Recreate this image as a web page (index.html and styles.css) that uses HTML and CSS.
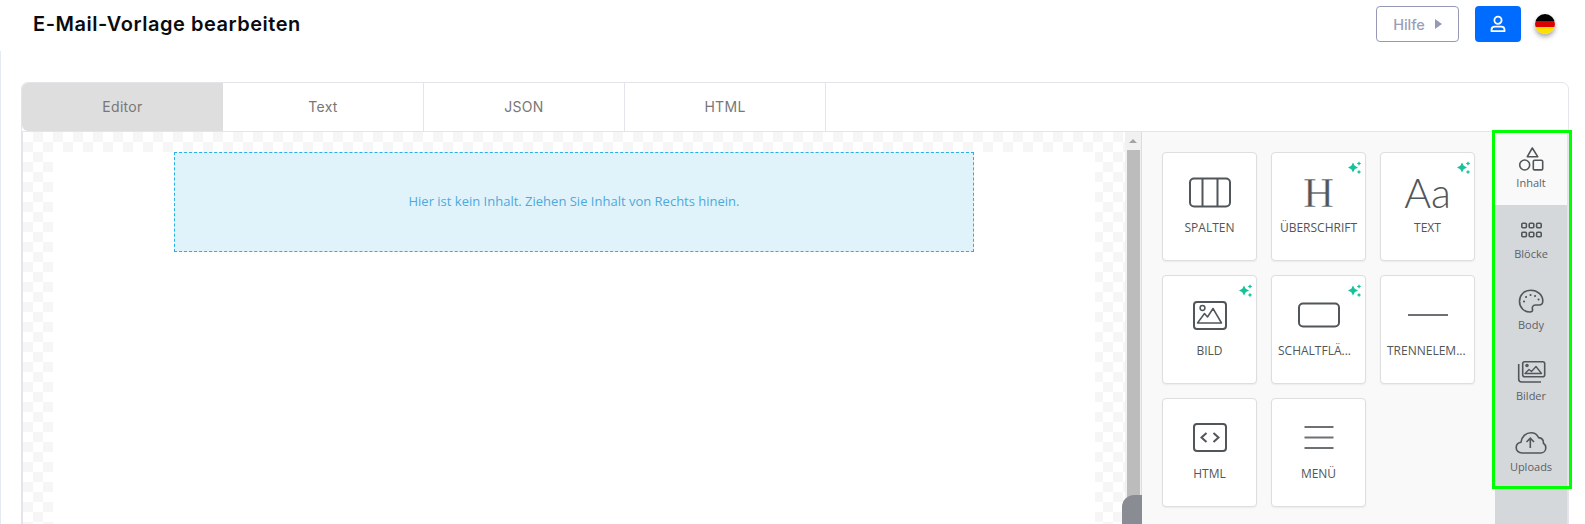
FILE: index.html
```html
<!DOCTYPE html>
<html lang="de">

<head>
    <meta charset="UTF-8">
    <meta name="viewport" content="width=device-width, initial-scale=1.0">
    <title>E-Mail-Vorlage bearbeiten</title>
    <link rel="stylesheet" href="styles.css">
</head>

<body>

    <svg class="defs" width="0" height="0">
        <symbol id="sparkle" viewBox="0 0 14 14">
            <path d="M5 1.5 6.7 4.8 10 6.5 6.7 8.2 5 11.5 3.3 8.2 0 6.5 3.3 4.8Z" />
            <path d="M11 .2 11.8 1.7 13.3 2.5 11.8 3.3 11 4.8 10.2 3.3 8.7 2.5 10.2 1.7Z" />
            <path d="M11 8.7 11.8 10.2 13.3 11 11.8 11.8 11 13.3 10.2 11.8 8.7 11 10.2 10.2Z" />
        </symbol>
    </svg>

    <header class="topbar">
        <h1 class="page-title">E-Mail-Vorlage bearbeiten</h1>
        <div class="topbar-actions">
            <button class="help-btn" type="button">Hilfe <span class="caret"></span></button>
            <button class="user-btn" type="button">
                <svg width="18" height="18" viewBox="0 0 18 18" fill="none" stroke="#fff" stroke-width="1.8">
                    <circle cx="9" cy="5.2" r="3.6" />
                    <path d="M2.5 16.2v-1.4c0-2 1.6-3.2 3.4-3.2h6.2c1.8 0 3.4 1.2 3.4 3.2v1.4Z" stroke-linejoin="round" />
                </svg>
            </button>
            <span class="flag"></span>
        </div>
    </header>

    <main class="main">
        <section class="panel">
            <nav class="tabs">
                <a class="tab tab-active">Editor</a>
                <a class="tab">Text</a>
                <a class="tab">JSON</a>
                <a class="tab">HTML</a>
            </nav>

            <div class="workarea">
                <div class="canvas">
                    <div class="canvas-body">
                        <div class="dropzone">Hier ist kein Inhalt. Ziehen Sie Inhalt von Rechts hinein.</div>
                    </div>
                </div>

                <div class="scrollbar">
                    <span class="scroll-up"></span>
                    <span class="scroll-thumb"></span>
                </div>

                <div class="tools">
                    <div class="tool">
                        <svg class="tool-icon" viewBox="0 0 44 42">
                            <rect x="2" y="6.5" width="40" height="28" rx="4" />
                            <path d="M14.5 6.5v28M29.5 6.5v28" />
                        </svg>
                        <span class="tool-label">Spalten</span>
                    </div>
                    <div class="tool">
                        <svg class="sparkle"><use href="#sparkle" /></svg>
                        <span class="tool-glyph glyph-h">H</span>
                        <span class="tool-label">Überschrift</span>
                    </div>
                    <div class="tool">
                        <svg class="sparkle"><use href="#sparkle" /></svg>
                        <span class="tool-glyph glyph-aa">Aa</span>
                        <span class="tool-label">Text</span>
                    </div>
                    <div class="tool">
                        <svg class="sparkle"><use href="#sparkle" /></svg>
                        <svg class="tool-icon" viewBox="0 0 44 42">
                            <rect x="6" y="7" width="32" height="27" rx="3" />
                            <circle cx="14.5" cy="13" r="2.4" stroke-width="1.5" />
                            <path d="M9.5 28 16.5 18.5 19.5 22 25 13.5 33.5 28Z" stroke-width="1.5" stroke-linejoin="round" />
                        </svg>
                        <span class="tool-label">Bild</span>
                    </div>
                    <div class="tool">
                        <svg class="sparkle"><use href="#sparkle" /></svg>
                        <svg class="tool-icon" viewBox="0 0 44 42">
                            <rect x="2" y="8.5" width="40" height="23" rx="4" />
                        </svg>
                        <span class="tool-label tool-label-cut">Schaltflä...</span>
                    </div>
                    <div class="tool">
                        <svg class="tool-icon tool-icon-soft" viewBox="0 0 44 42">
                            <path d="M2 20h40" />
                        </svg>
                        <span class="tool-label tool-label-cut">Trennelem...</span>
                    </div>
                    <div class="tool">
                        <svg class="tool-icon" viewBox="0 0 44 42">
                            <rect x="6" y="6" width="32" height="27" rx="3" />
                            <path d="M18.5 15 13.5 19.5 18.5 24M25.5 15 30.5 19.5 25.5 24" />
                        </svg>
                        <span class="tool-label">HTML</span>
                    </div>
                    <div class="tool">
                        <svg class="tool-icon tool-icon-soft" viewBox="0 0 44 42">
                            <path d="M7.5 9h29M7.5 19.5h29M7.5 30h29" />
                        </svg>
                        <span class="tool-label">Menü</span>
                    </div>
                </div>

                <aside class="sidebar">
                    <div class="side-item side-active">
                        <svg class="side-icon" viewBox="0 0 36 24">
                            <path d="M19.3 1 24.7 9.7H14.3Z" stroke-linejoin="round" />
                            <circle cx="11.7" cy="18" r="5" />
                            <rect x="20.3" y="13.3" width="9.4" height="9.6" rx="1.2" />
                        </svg>
                        <span class="side-label">Inhalt</span>
                    </div>
                    <div class="side-item">
                        <svg class="side-icon" viewBox="0 0 36 24">
                            <rect x="8.8" y="5.2" width="4.6" height="4.6" rx="1" />
                            <rect x="16.2" y="5.2" width="4.6" height="4.6" rx="1" />
                            <rect x="23.6" y="5.2" width="4.6" height="4.6" rx="1" />
                            <rect x="8.8" y="14.2" width="4.6" height="4.6" rx="1" />
                            <rect x="16.2" y="14.2" width="4.6" height="4.6" rx="1" />
                            <rect x="23.6" y="14.2" width="4.6" height="4.6" rx="1" />
                        </svg>
                        <span class="side-label">Blöcke</span>
                    </div>
                    <div class="side-item">
                        <svg class="side-icon" viewBox="0 0 36 24">
                            <path d="M18 1.2C11 1.2 6.5 6.2 6.5 12.2 6.5 18.5 11 23 17 23 19 23 19.8 21.8 19.5 20.5 19 18.5 19.5 16 22.5 16H26C28.5 16 29.8 14.5 29.8 12 29.8 6 24.5 1.2 18 1.2Z" stroke-linejoin="round" />
                            <path d="M11 12.5h.1M13 8h.1M17.5 6h.1M22 7h.1M25.5 10.5h.1" stroke-width="2" stroke-linecap="round" />
                        </svg>
                        <span class="side-label">Body</span>
                    </div>
                    <div class="side-item">
                        <svg class="side-icon" viewBox="0 0 36 24">
                            <rect x="9.7" y="1.7" width="22" height="15" rx="2" />
                            <path d="M5.7 4v15a3 3 0 0 0 3 3H28" />
                            <circle cx="14" cy="5.5" r="1" />
                            <path d="M12 13.5 16 9.5 18.5 11.5 23 6.5 28.5 13.5Z" stroke-width="1.3" stroke-linejoin="round" />
                        </svg>
                        <span class="side-label">Bilder</span>
                    </div>
                    <div class="side-item">
                        <svg class="side-icon" viewBox="0 0 36 24">
                            <path d="M9 22C5.5 22 3.2 19.5 3.2 16.7 3.2 13.8 5.2 11.8 8 11.3 8.5 5.5 13 1.8 18 1.8 21.5 1.8 24.2 3.6 25.6 6.6 28.8 7 30.6 9.4 30.4 12.2 32 13.2 32.8 14.8 32.8 16.7 32.8 19.8 30.5 22 27.5 22Z" stroke-linejoin="round" />
                            <path d="M17.3 17V7.5M13.5 11 17.3 7.2 21 11" />
                        </svg>
                        <span class="side-label">Uploads</span>
                    </div>
                </aside>

                <!-- ecke vom Scroll-Widget, liegt über dem Scrollbalken -->
                <span class="corner"></span>
                <!-- grüner Rahmen um die Tabs -->
                <span class="highlight"></span>
            </div>
        </section>
    </main>

</body>

</html>
```

FILE: styles.css
```css
* {
    box-sizing: border-box;
}

html,
body {
    height: 524px;
}

body {
    margin: 0;
    display: flex;
    flex-direction: column;
    overflow: hidden;
    background-color: #fff;
    font-family: "Open Sans", sans-serif;
}

.defs {
    position: absolute;
}

/* Kopfzeile */
.topbar {
    height: 51px;
    flex-shrink: 0;
    display: flex;
    align-items: center;
    justify-content: space-between;
    padding: 0 30px 3px 33px;
}

.page-title {
    margin: 0;
    font-family: Inter, sans-serif;
    font-size: 20px;
    font-weight: 600;
    letter-spacing: 0.52px;
    color: #0b0b0f;
}

.topbar-actions {
    display: flex;
    align-items: center;
}

.help-btn {
    width: 83px;
    height: 36px;
    display: flex;
    align-items: center;
    justify-content: center;
    gap: 10px;
    padding: 0;
    background-color: #fff;
    border: 1px solid #9599b5;
    border-radius: 4px;
    font-family: Inter, sans-serif;
    font-size: 14.5px;
    font-weight: 500;
    color: #9a9db8;
}

.caret {
    width: 0;
    height: 0;
    border-left: 7px solid #9599b5;
    border-top: 5px solid transparent;
    border-bottom: 5px solid transparent;
}

.user-btn {
    width: 46px;
    height: 36px;
    margin-left: 16px;
    display: flex;
    align-items: center;
    justify-content: center;
    padding: 0;
    background-color: #006cff;
    border: none;
    border-radius: 4px;
}

.flag {
    width: 20px;
    height: 20px;
    margin-left: 14px;
    border-radius: 50%;
    background: linear-gradient(#000 0 33%, #dd0000 33% 66%, #ffdf00 66%);
    box-shadow: 0 3px 5px rgba(0, 0, 0, 0.35);
}

/* Hauptbereich */
.main {
    flex: 1;
    min-height: 0;
    display: flex;
    padding: 31px 16px 0 20px;
    border-left: 1px solid #e4e9f2;
}

.panel {
    flex: 1;
    height: 460px;
    display: flex;
    flex-direction: column;
    background-color: #fff;
    border: 1px solid #e4e4ea;
    border-radius: 7px;
}

.tabs {
    height: 49px;
    flex-shrink: 0;
    display: flex;
    border-bottom: 1px solid #e4e4ea;
}

.tab {
    width: 201px;
    display: flex;
    align-items: center;
    justify-content: center;
    padding-bottom: 2px;
    border-right: 1px solid #e4e4ea;
    font-family: Inter, sans-serif;
    font-size: 14px;
    letter-spacing: 0.3px;
    color: #777;
}

.tab-active {
    background-color: #dedede;
    border-right: none;
    border-radius: 6px 0 0 6px;
}

.workarea {
    flex: 1;
    min-height: 0;
    position: relative;
    display: flex;
}

/* Zeichenfläche */
.canvas {
    width: 1103px;
    padding: 20px 30px 0;
    border-left: 1px solid #e4e4ea;
    background-color: #fff;
    background-image: conic-gradient(#f6f6f6 25%, #fff 0 50%, #f6f6f6 0 75%, #fff 0);
    background-size: 20px 20px;
}

.canvas-body {
    height: 100%;
    display: flex;
    flex-direction: column;
    align-items: center;
    background-color: #fff;
}

.dropzone {
    width: 800px;
    height: 100px;
    display: flex;
    align-items: center;
    justify-content: center;
    padding-bottom: 2px;
    background-color: #e1f3fa;
    border: 1px dashed #2bb0e6;
    font-size: 13px;
    color: #4ca9de;
}

.scrollbar {
    width: 17px;
    flex-shrink: 0;
    display: flex;
    flex-direction: column;
    align-items: center;
    padding: 7px 2px 0;
    background-color: #f1f1f1;
    border-right: 1px solid #ddd;
}

.scroll-up {
    width: 0;
    height: 0;
    border-left: 4px solid transparent;
    border-right: 4px solid transparent;
    border-bottom: 4px solid #a3a3a3;
}

.scroll-thumb {
    flex: 1;
    width: 13px;
    margin-top: 7px;
    background-color: #bcbcbc;
}

/* Inhaltsblöcke */
.tools {
    width: 353px;
    flex-shrink: 0;
    display: grid;
    grid-template-columns: repeat(3, 95px);
    grid-auto-rows: 109px;
    gap: 14px;
    align-content: start;
    padding: 20px 20px 0;
    background-color: #f9f9f9;
}

.tool {
    position: relative;
    display: flex;
    flex-direction: column;
    align-items: center;
    padding: 19px 5px 0;
    background-color: #fff;
    border: 1px solid #dedede;
    border-radius: 4px;
    box-shadow: 0 1px 2px rgba(0, 0, 0, 0.06);
}

.tool-icon {
    width: 44px;
    height: 42px;
    flex-shrink: 0;
    fill: none;
    stroke: #505659;
    stroke-width: 2;
}

.tool-icon-soft {
    stroke: #6d7174;
}

.tool-glyph {
    height: 42px;
    flex-shrink: 0;
    display: flex;
    align-items: center;
    padding-bottom: 2px;
    color: #505659;
}

.glyph-h {
    font-family: "Liberation Serif", serif;
    font-size: 43px;
    -webkit-text-stroke: 0.5px #fff;
}

.glyph-aa {
    font-family: Lato, sans-serif;
    font-size: 41px;
    font-weight: 300;
}

.tool-label {
    width: 100%;
    margin-top: 5px;
    white-space: nowrap;
    text-align: center;
    text-transform: uppercase;
    font-size: 12px;
    line-height: 18px;
    color: #505659;
}

.tool-label-cut {
    padding-left: 1px;
    text-align: left;
}

.sparkle {
    position: absolute;
    top: 8px;
    right: 3px;
    width: 14px;
    height: 14px;
    fill: #14c39a;
}

/* Seitenleiste */
.sidebar {
    width: 73px;
    flex-shrink: 0;
    display: flex;
    flex-direction: column;
    padding-top: 2px;
    background-color: #d5d8db;
    border-right: 1px solid #e2e3e6;
}

.side-item {
    height: 71px;
    flex-shrink: 0;
    display: flex;
    flex-direction: column;
    align-items: center;
    padding-top: 13px;
}

.side-active {
    height: 73px;
    margin-top: -2px;
    padding-top: 15px;
    background-color: #f9f9f9;
}

.side-icon {
    width: 36px;
    height: 24px;
    fill: none;
    stroke: #505659;
    stroke-width: 1.6;
}

.side-label {
    margin-top: 4px;
    font-size: 11px;
    line-height: 16px;
    color: #5c6166;
}

.corner {
    position: absolute;
    left: 1100px;
    top: 363px;
    width: 20px;
    height: 40px;
    background-color: #898d93;
    border-top-left-radius: 12px;
}

.highlight {
    position: absolute;
    left: 1470px;
    top: -2px;
    width: 80px;
    height: 359px;
    border: 3px solid #00ff00;
}
```
